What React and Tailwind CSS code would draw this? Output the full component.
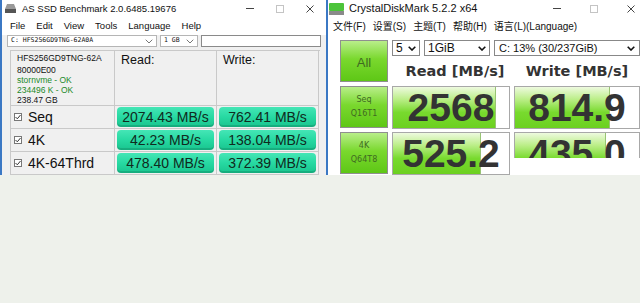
import React from 'react'

const ui = { fontFamily: '"Liberation Sans", Arial, sans-serif' }
const cn = { fontFamily: '"Liberation Sans", "Noto Sans CJK SC", sans-serif' }
const verdana = { fontFamily: '"DejaVu Sans", Verdana, sans-serif' }
const mono = { fontFamily: '"DejaVu Sans Mono", monospace' }

const ROWS = [
  { label: 'Seq', read: '2074.43 MB/s', write: '762.41 MB/s' },
  { label: '4K', read: '42.23 MB/s', write: '138.04 MB/s' },
  { label: '4K-64Thrd', read: '478.40 MB/s', write: '372.39 MB/s' },
]

function WinControls({ gap, pr }) {
  return (
    <div className={`flex items-center ${gap} ${pr}`}>
      <span className="block w-[8px] h-px bg-[#444]" />
      <span className="block w-[8px] h-[8px] border border-[#c4c4c4]" />
      <svg width="8" height="8" viewBox="0 0 8 8" stroke="#444" strokeWidth="1">
        <path d="M0.5 0.5 7.5 7.5 M7.5 0.5 0.5 7.5" />
      </svg>
    </div>
  )
}

function Chevron({ bold }) {
  return (
    <svg width="8" height="5" viewBox="0 0 8 5" fill="none" stroke={bold ? '#111' : '#777'} strokeWidth={bold ? 1.6 : 1}>
      <path d="M0.7 0.7 4 4 7.3 0.7" />
    </svg>
  )
}

function AsSsd() {
  return (
    <div className="w-[326px] h-full flex flex-col bg-[#f0f0f0] border-l-2 border-[#3b78c4] text-[#111]" style={ui}>
      <div className="h-[18px] bg-white flex items-center justify-between">
        <div className="flex items-center gap-[6px] pl-[3px]">
          <svg width="11" height="9" viewBox="0 0 11 9">
            <path d="M2 0h7l2 5H0z" fill="#999" />
            <rect x="0" y="5" width="11" height="4" fill="#555" />
          </svg>
          <span className="text-[9.5px]">AS SSD Benchmark 2.0.6485.19676</span>
        </div>
        <WinControls gap="gap-[22px]" pr="pr-[12px]" />
      </div>
      <div className="h-[18px] bg-white flex items-center gap-[11px] pl-[8px] text-[9.5px]">
        <span>File</span>
        <span>Edit</span>
        <span>View</span>
        <span>Tools</span>
        <span>Language</span>
        <span>Help</span>
      </div>
      <div className="flex items-center gap-[3px] px-[5px] h-[14px]">
        <div className="w-[150px] h-[12px] bg-white border border-[#b5b5b5] flex items-center justify-between px-[3px]">
          <span className="text-[6.5px]" style={mono}>C: HFS256GD9TNG-62A0A</span>
          <Chevron />
        </div>
        <div className="w-[38px] h-[12px] bg-white border border-[#b5b5b5] flex items-center justify-between px-[3px]">
          <span className="text-[6.5px]" style={mono}>1 GB</span>
          <Chevron />
        </div>
        <div className="w-[120px] h-[12px] bg-white border border-[#8a8a8a]" />
      </div>
      <div className="flex-1 pl-[8px] pt-[2px] pr-[6px]">
        <div className="grid grid-cols-[104px_102px_102px] grid-rows-[55px_23px_23px_23px] border-t border-l border-[#c9c9c9]">
          <div className="border-r border-b border-[#c9c9c9] px-[6px] pt-[2px] text-[8.5px] leading-[10px]">
            <div className="mb-[2px]">HFS256GD9TNG-62A</div>
            <div>80000E00</div>
            <div className="text-[#1c8a2a]">stornvme - OK</div>
            <div className="text-[#1c8a2a]">234496 K - OK</div>
            <div>238.47 GB</div>
          </div>
          <div className="border-r border-b border-[#c9c9c9] pl-[6px] text-[12.5px]">Read:</div>
          <div className="border-r border-b border-[#c9c9c9] pl-[6px] text-[12.5px]">Write:</div>
          {ROWS.map((r) => (
            <React.Fragment key={r.label}>
              <div className="border-r border-b border-[#c9c9c9] flex items-center gap-[6px] pl-[3px] text-[14px]">
                <span className="w-[8px] h-[8px] border border-[#777] bg-white flex items-center justify-center">
                  <svg width="6" height="6" viewBox="0 0 6 6" fill="none" stroke="#333" strokeWidth="1">
                    <path d="M0.5 3 2.3 4.8 5.5 1" />
                  </svg>
                </span>
                <span>{r.label}</span>
              </div>
              {[r.read, r.write].map((v, i) => (
                <div key={i} className="border-r border-b border-[#c9c9c9] px-[2px] py-[1px]">
                  <div className="h-full rounded-[4px] flex items-center justify-center text-[14px] text-[#102a20] bg-[linear-gradient(to_bottom,#45e6b6_0%,#27d9a2_50%,#19c48e_100%)] shadow-[inset_0_-2px_0_rgba(0,0,0,0.12)]">
                    {v}
                  </div>
                </div>
              ))}
            </React.Fragment>
          ))}
        </div>
      </div>
    </div>
  )
}

function GreenBtn({ children, className }) {
  return (
    <div className={`w-[48px] h-[42px] border border-[#8f8f8f] bg-[linear-gradient(to_bottom,#b9ee8a_0%,#7ad82e_45%,#5ec716_100%)] flex flex-col items-center justify-center text-[#3f6a22] ${className}`}>
      {children}
    </div>
  )
}

function Meter({ value, fill, className }) {
  return (
    <div className={`h-[43px] shrink-0 border border-[#a8a8a8] bg-white overflow-hidden relative ${className}`}>
      <div
        className="h-full bg-[linear-gradient(to_bottom,#eefadf_0%,#bbee88_30%,#78da2e_62%,#6cd020_100%)] border-r border-[#98c474]"
        style={{ width: `${fill}%` }}
      />
      <div className="absolute inset-0 flex items-center justify-center text-[39px] font-bold text-[#333] leading-none" style={ui}>
        {value}
      </div>
    </div>
  )
}

function Crystal() {
  return (
    <div className="flex-1 h-full flex flex-col bg-white border-l-2 border-[#3b78c4] text-[#111]">
      <div className="h-[17px] flex items-center justify-between">
        <div className="flex items-center gap-[5px] pl-[1px]">
          <svg width="15" height="12" viewBox="0 0 15 12">
            <rect x="0" y="0" width="15" height="8" rx="1" fill="#4cc43a" />
            <rect x="0" y="8" width="15" height="4" fill="#8a8a8a" />
          </svg>
          <span className="text-[11px]" style={ui}>CrystalDiskMark 5.2.2 x64</span>
        </div>
        <WinControls gap="gap-[29px]" pr="pr-[5px]" />
      </div>
      <div className="h-[19px] flex items-center gap-[7px] pl-[5px] text-[10px]" style={cn}>
        <span>文件(F)</span>
        <span>设置(S)</span>
        <span>主题(T)</span>
        <span>帮助(H)</span>
        <span>语言(L)(Language)</span>
      </div>
      <div className="flex pl-[12px] pt-[4px] gap-[4px]">
        <div className="flex flex-col gap-[4px] shrink-0">
          <GreenBtn>
            <span className="text-[13px] pt-[3px]" style={ui}>All</span>
          </GreenBtn>
          <GreenBtn className="text-[8px] leading-[14px]">
            <span style={verdana}>Seq</span>
            <span style={verdana}>Q16T1</span>
          </GreenBtn>
          <GreenBtn className="text-[8px] leading-[14px]">
            <span style={verdana}>4K</span>
            <span style={verdana}>Q64T8</span>
          </GreenBtn>
        </div>
        <div className="flex-1 flex flex-col">
          <div className="flex gap-[4px] h-[16px] text-[11px]" style={ui}>
            <div className="w-[28px] border border-[#888] flex items-center justify-between px-[3px]">
              <span className="text-[12px]">5</span>
              <Chevron bold />
            </div>
            <div className="w-[66px] border border-[#888] flex items-center justify-between px-[3px]">
              <span className="text-[12px]">1GiB</span>
              <Chevron bold />
            </div>
            <div className="flex-1 border border-[#888] flex items-center justify-between pl-[4px] pr-[4px]">
              <span>C: 13% (30/237GiB)</span>
              <Chevron bold />
            </div>
          </div>
          <div className="h-[30px] flex items-center pt-[2px] text-[14.5px] font-bold text-[#333]" style={verdana}>
            <div className="w-[118px] text-center pl-[8px]">Read [MB/s]</div>
            <div className="flex-1 text-center pl-[4px]">Write [MB/s]</div>
          </div>
          <div className="flex gap-[4px] mb-[3px]">
            <Meter value="2568" fill={89} className="w-[118px]" />
            <Meter value="814.9" fill={77} className="flex-1" />
          </div>
          <div className="flex gap-[4px] items-start">
            <Meter value="525.2" fill={76} className="w-[118px]" />
            <div className="flex-1 h-[26px] overflow-hidden">
              <Meter value="435.0" fill={73} className="w-full" />
            </div>
          </div>
        </div>
      </div>
    </div>
  )
}

export default function App() {
  return (
    <div className="w-[640px] h-[303px] bg-[#eef1eb] overflow-hidden">
      <div className="h-[175px] flex overflow-hidden">
        <AsSsd />
        <Crystal />
      </div>
    </div>
  )
}
